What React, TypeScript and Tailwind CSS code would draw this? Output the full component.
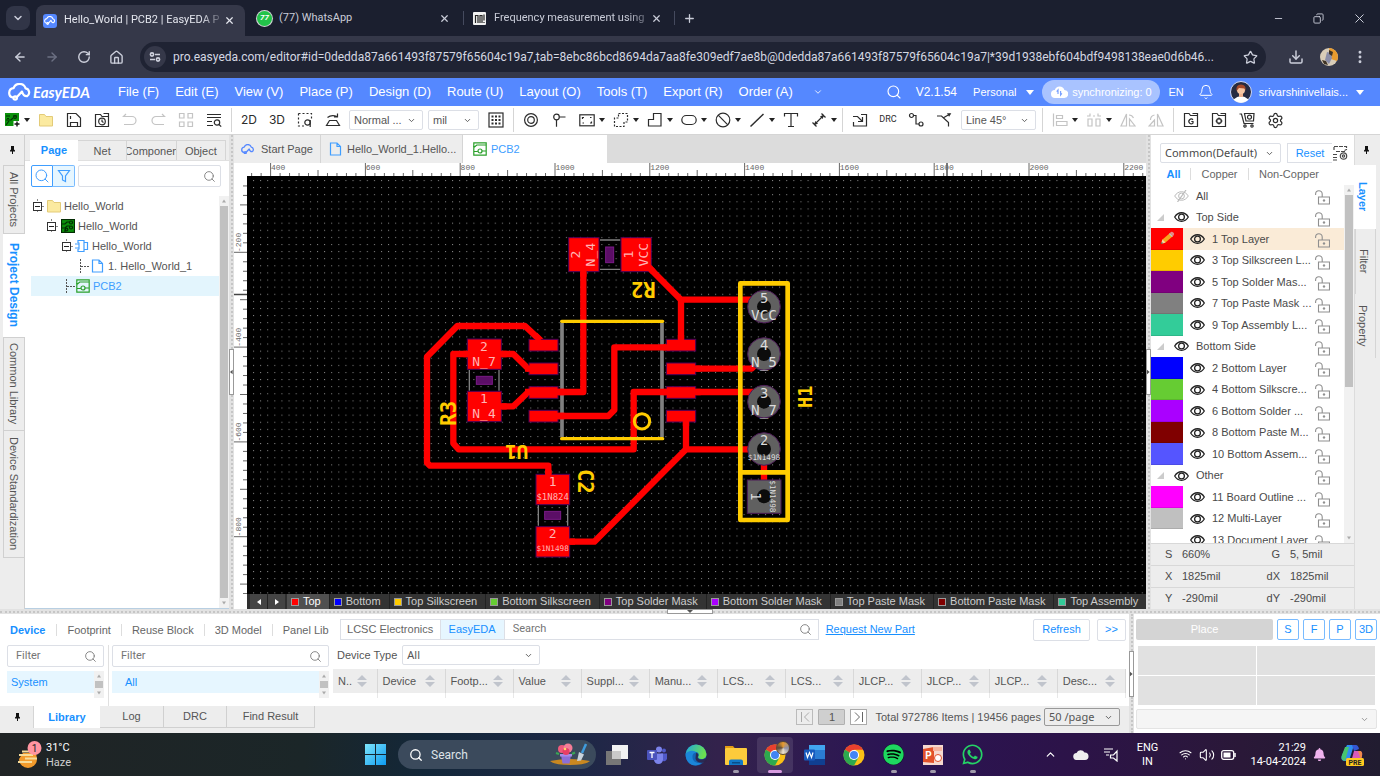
import React from "react";
import {
  ArrowLeft, ArrowRight, RotateCw, House, Star, Download, EllipsisVertical, X, Plus,
  ChevronDown, ChevronUp, Minus, Copy, Search, Bell, Settings, Wifi, Volume2,
} from "lucide-react";
import { FaWhatsapp, FaSpotify, FaBell } from "react-icons/fa";

type IconProps = { children: React.ReactNode; size?: number; className?: string; w?: number };

function Ico({ children, size = 16, w, className = "" }: IconProps) {
  return (
    <svg
      width={w ?? size}
      height={size}
      viewBox={`0 0 ${w ?? size} ${size}`}
      fill="none"
      stroke="currentColor"
      strokeWidth="1.2"
      className={`shrink-0 ${className}`}
      aria-hidden="true"
    >
      {children}
    </svg>
  );
}

/* ---------- Browser chrome ---------- */

function CloudLogo({ className = "" }: { className?: string }) {
  return (
    <svg viewBox="0 0 24 18" fill="none" stroke="currentColor" strokeWidth="2.2" strokeLinecap="round" strokeLinejoin="round" className={className} aria-hidden="true">
      <path d="M5 14.5A4.700 4.700 0 0 1 5.600 5.200 6.300 6.300 0 0 1 17.600 5.400 4.200 4.200 0 0 1 19 13.200Q15.500 13.500 14 8.600L8.500 14.600" />
      <circle cx="7.200" cy="15" r="1.700" />
    </svg>
  );
}

function BrowserTabs() {
  return (
    <div className="flex h-9 shrink-0 items-stretch bg-[#1b1f2f] pl-1.5 font-['Roboto',sans-serif] text-[11px] text-[#c9ccd8]">
      <button aria-label="Search tabs" className="mr-1.5 mt-1.5 flex size-6 items-center justify-center rounded-lg bg-[#313547]">
        <ChevronDown size={12} strokeWidth={3} />
      </button>
      <div className="mt-[5px] flex w-[209px] items-center rounded-t-lg bg-[#353849] pl-[7px] pr-1.5 text-[#e4e6ee]">
        <span className="mr-[7px] flex size-[14px] shrink-0 items-center justify-center rounded-[3px] bg-[#5588ff]">
          <CloudLogo className="w-3 text-white" />
        </span>
        <span className="whitespace-nowrap [mask-image:linear-gradient(to_right,#000_88%,#0004)]">Hello_World | PCB2 | EasyEDA P</span>
        <button aria-label="Close tab" className="ml-auto p-1"><X size={11} strokeWidth={2.6} /></button>
      </div>
      <div className="flex w-[209px] items-center pl-3">
        <span className="mr-[7px] flex size-[15px] items-center justify-center rounded-full bg-[#23c34a] text-[8px] font-bold italic text-white ring-1 ring-white/80">77</span>
        <span>(77) WhatsApp</span>
        <button aria-label="Close tab" className="ml-auto p-1"><X size={11} strokeWidth={2.6} /></button>
      </div>
      <div className="mx-[9px] my-auto h-3.5 w-px shrink-0 bg-[#454a5e]" />
      <div className="flex w-[193px] items-center">
        <svg width="13" height="13" viewBox="0 0 13 13" className="mr-2 shrink-0" aria-hidden="true">
          <rect width="13" height="13" rx="1" fill="#f2f2f2" />
          <path d="M2.500 11V3.500h2.500V11M7 11V3.500h2V11M11 2.500v6M11 10v1" stroke="#222" fill="none" strokeWidth="1.200" />
        </svg>
        <span className="whitespace-nowrap [mask-image:linear-gradient(to_right,#000_88%,#0006)]">Frequency measurement using</span>
        <button aria-label="Close tab" className="ml-auto p-1"><X size={11} strokeWidth={2.6} /></button>
      </div>
      <div className="my-auto ml-2 h-3.5 w-px bg-[#454a5e]" />
      <button aria-label="New tab" className="ml-2"><Plus size={13} strokeWidth={2.4} /></button>
      <div className="ml-auto flex items-center">
        <button aria-label="Minimise" className="flex w-10 justify-center"><Minus size={11} /></button>
        <button aria-label="Restore" className="flex w-10 justify-center"><Copy size={11} className="-scale-x-100" /></button>
        <button aria-label="Close window" className="flex w-[42px] justify-center"><X size={15} strokeWidth={1.6} /></button>
      </div>
    </div>
  );
}

function AddressBar() {
  return (
    <div className="flex h-[42px] shrink-0 items-center bg-[#353849] px-1 text-[#cdd0dc]">
      <button aria-label="Back" className="flex w-8 justify-center"><ArrowLeft size={14} strokeWidth={2.4} /></button>
      <button aria-label="Forward" className="flex w-8 justify-center text-[#6c7083]"><ArrowRight size={14} strokeWidth={2.4} /></button>
      <button aria-label="Reload" className="flex w-8 justify-center"><RotateCw size={14} strokeWidth={2.4} /></button>
      <button aria-label="Home" className="flex w-8 justify-center"><House size={15} strokeWidth={2.2} /></button>
      <div className="ml-2 flex h-[30px] min-w-0 flex-1 items-center rounded-full bg-[#1f2333] pl-1 pr-2">
        <span className="flex size-[22px] items-center justify-center rounded-full bg-[#353849]">
          <Ico size={12}>
            <g strokeWidth="1.6"><circle cx="3" cy="3.500" r="1.600" /><path d="M6 3.500h5M1 8.500h5" /><circle cx="9" cy="8.500" r="1.600" /></g>
          </Ico>
        </span>
        <label className="sr-only" htmlFor="url">Address</label>
        <input
          id="url"
          readOnly
          className="ml-[7px] min-w-0 flex-1 bg-transparent font-['Roboto',sans-serif] text-[12px] text-[#d5d8e2] outline-none"
          value="pro.easyeda.com/editor#id=0dedda87a661493f87579f65604c19a7,tab=8ebc86bcd8694da7aa8fe309edf7ae8b@0dedda87a661493f87579f65604c19a7|*39d1938ebf604bdf9498138eae0d6b46..."
        />
        <Star size={15} strokeWidth={2} className="shrink-0" />
      </div>
      <button aria-label="Downloads" className="ml-4 flex w-7 justify-center"><Download size={16} strokeWidth={2.2} /></button>
      <svg width="18" height="18" viewBox="0 0 18 18" className="ml-2.5" aria-hidden="true">
        <circle cx="9" cy="9" r="9" fill="#d9cdb8" />
        <path d="M9 0a9 9 0 0 1 8 13l-6-2-1-6z" fill="#e89b2e" />
        <path d="M7 4l4 1 1 5-3 6-4-4z" fill="#8b8ea8" />
        <path d="M9 2l4 2-1 4-3-2zM2 12l4 1 2 4-4-1z" fill="#3f3324" />
      </svg>
      <button aria-label="Menu" className="ml-3 mr-1.5 flex w-5 justify-center"><EllipsisVertical size={16} strokeWidth={2.4} /></button>
    </div>
  );
}

/* ---------- Application header ---------- */

const menus = ["File (F)", "Edit (E)", "View (V)", "Place (P)", "Design (D)", "Route (U)", "Layout (O)", "Tools (T)", "Export (R)", "Order (A)"];

function AppHeader() {
  return (
    <header className="flex h-7 shrink-0 items-center bg-[#5588ff] pl-2 pr-4 text-[13px] text-white">
      <CloudLogo className="w-[24px]" />
      <span className="w-[86px] pl-px font-['Lato',sans-serif] text-[15px] font-bold italic">EasyEDA</span>
      <nav className="flex gap-4">
        {menus.map((m) => <button key={m} className="whitespace-nowrap">{m}</button>)}
      </nav>
      <button aria-label="More menus" className="ml-5"><ChevronDown size={10} /></button>
      <span className="flex-1" />
      <button aria-label="Search"><Search size={16} strokeWidth={1.7} /></button>
      <span className="ml-3.5 text-[12px]">V2.1.54</span>
      <button className="ml-4 flex items-center text-[11px]">Personal<Caret className="ml-2.5" big /></button>
      <span className="ml-2 flex h-6 w-[118px] items-center justify-center rounded-full bg-[#a9c3ff] text-[11px]">
        <svg width="17" height="14" viewBox="0 0 17 14" className="mr-1" aria-hidden="true">
          <path d="M4.200 13A4 4 0 0 1 3.800 5 5 5 0 0 1 13.400 5a4 4 0 0 1-.4 8z" fill="#fff" />
          <path d="M7 9V5L5.700 6.600M9.600 6v4l1.300-1.600" stroke="#7ba2ff" strokeWidth="1.200" fill="none" />
        </svg>
        synchronizing: 0
      </span>
      <button className="ml-2 text-[11px]">EN</button>
      <button aria-label="Notifications" className="ml-3.5"><Bell size={16} strokeWidth={1.5} /></button>
      <svg width="22" height="22" viewBox="0 0 22 22" className="ml-4" aria-hidden="true">
        <circle cx="11" cy="11" r="10.500" fill="#272b41" stroke="#cfd8f5" />
        <path d="M3.500 18.500q7.500-7 15 0a10.500 10.500 0 0 1-15 0z" fill="#fff" />
        <rect x="9" y="11" width="4" height="5" fill="#f0b38f" />
        <circle cx="11" cy="9" r="4" fill="#f7c6a3" />
        <path d="M6.500 10Q5.500 3.500 11 3.500T15.500 10L14.500 7.500 9 7z" fill="#a5492b" />
      </svg>
      <button className="ml-[7px] flex items-center text-[11px]">srivarshinivellais...<Caret className="ml-2" big /></button>
    </header>
  );
}

function Caret({ className = "", big = false }: { className?: string; big?: boolean }) {
  return big ? (
    <svg width="8" height="5" viewBox="0 0 8 5" className={`shrink-0 ${className}`} aria-hidden="true"><path d="M0 0h8L4 5z" fill="currentColor" /></svg>
  ) : (
    <svg width="6" height="4" viewBox="0 0 6 4" className={`shrink-0 ${className}`} aria-hidden="true"><path d="M0 0h6L3 4z" fill="#222" /></svg>
  );
}

/* ---------- Toolbar ---------- */

function Tool({ label, children, caret = false, faded = false }: { label: string; children: React.ReactNode; caret?: boolean; faded?: boolean }) {
  return (
    <button
      aria-label={label}
      className={`flex h-full shrink-0 items-center ${caret ? "w-[34px] pl-1.5" : "w-7 justify-center"} ${faded ? "text-[#c4c4c4]" : "text-[#2c2c2c]"}`}
    >
      {children}
      {caret && <Caret className="ml-1" />}
    </button>
  );
}

const Sep = () => <div className="mx-[3px] h-6 w-px shrink-0 bg-[#d5d5d5]" />;

function Dropdown({ label, value, className, plain = false }: { label: string; value: string; className: string; plain?: boolean }) {
  return (
    <span className={`relative flex shrink-0 items-center ${className}`}>
      <select aria-label={label} defaultValue={value} className={`size-full appearance-none rounded-[2px] border pl-1 outline-none ${plain ? "border-[#999] bg-[#ededed]" : "border-[#dcdfe6] bg-white"}`}>
        <option>{value}</option>
      </select>
      <ChevronDown size={9} strokeWidth={2.4} className="pointer-events-none absolute right-[7px] text-[#555]" />
    </span>
  );
}

function BoardIcon() {
  return (
    <Ico size={14}>
      <rect x=".5" y=".5" width="13" height="13" fill="#0c8f0c" stroke="#032c03" />
      <g stroke="#032c03"><path d="M1 5h3l2-2h2M1 9h3l2-2h3M4 13v-2l1-1" /><circle cx="10" cy="3.500" r="1.500" /><circle cx="10" cy="8.500" r="1.500" /><circle cx="5.500" cy="10.500" r="1.300" /></g>
    </Ico>
  );
}

function FolderIcon() {
  return (
    <Ico size={14}>
      <path d="M.5 1.500h5l1.500 2h6.500v9.500H.5z" fill="#fbeaa0" stroke="#e3cb78" strokeWidth="1" />
    </Ico>
  );
}

function Toolbar() {
  return (
    <div className="flex h-[29px] shrink-0 items-center border-b border-[#d5d5d5] bg-white text-[11px] text-[#555]">
      <button aria-label="New project" className="flex w-8 shrink-0 items-center pl-[5px]">
        <Ico size={15} w={16}>
          <rect width="14" height="13" fill="#0b920b" stroke="none" />
          <path d="M1 3h4M8 3h4M1 7h5l2-2M1 12l3-4M2 5.500h2" stroke="#033303" />
          <circle cx="10" cy="4" r="1.400" stroke="#033303" />
          <rect x="8.500" y="8" width="7" height="7" fill="#fff" stroke="none" />
          <path d="M12 8.500v5M9.500 11h5" stroke="#111" strokeWidth="1.400" />
        </Ico>
        <Caret className="ml-[3px]" />
      </button>
      <Tool label="Open"><FolderIcon /></Tool>
      <Tool label="Save"><Ico><path d="M1.500 1.500h8.500l4.500 4.500v8.500h-13zM4.500 14.500V10.500h7v4M4.500 4v3" /></Ico></Tool>
      <Tool label="History"><Ico><path d="M1.500 2.500h5l1.500 2h6.500v10h-13zM14.500 7V1.500h-5" /><circle cx="8" cy="9.500" r="3.300" /><path d="M8 7.500V9.500l1.500 1" /></Ico></Tool>
      <Tool label="Undo" faded><Ico><path d="M4 2L1.500 4.500H10a4 4 0 0 1 0 8H2" /></Ico></Tool>
      <Tool label="Redo" faded><Ico><path d="M12 2l2.500 2.500H6a4 4 0 0 0 0 8h8" /></Ico></Tool>
      <Tool label="Panels" faded><Ico><path d="M1.500 1.500h4.500v4.500H1.500zM10 1.500h4.500v4.500h-4.500zM1.500 10h4.500v4.500H1.500zM10 10h4.500v4.500h-4.500z" /></Ico></Tool>
      <Tool label="Find"><Ico><path d="M1 2.500h14M1 5.500h14M1 9.500h5M1 13.500h6" /><circle cx="11" cy="10.500" r="2.700" /><path d="M13 12.500l2.200 2.200" /></Ico></Tool>
      <Sep />
      <Tool label="2D view"><span className="font-['Inter',sans-serif] text-[12px]">2D</span></Tool>
      <Tool label="3D view"><span className="font-['Inter',sans-serif] text-[12px]">3D</span></Tool>
      <Tool label="Select area"><Ico><path d="M1.500 1.500h13v6M1.500 1.500v12.500h6" strokeDasharray="2 2" /><circle cx="10.500" cy="10.500" r="2.700" /><path d="M13.200 8v7" /></Ico></Tool>
      <Tool label="Flip board"><Ico><path d="M4.500 8.500h7l3 5h-13zM2.500 5.500a7 4 0 0 1 9.500-1M12.500 1.500v3.500H9" /></Ico></Tool>
      <Dropdown label="Display mode" value="Normal ..." className="mx-[2px] h-5 w-[74px]" />
      <Dropdown label="Unit" value="mil" className="mx-[3px] h-5 w-[51px]" />
      <Tool label="Grid"><Ico><rect x="1" y="1" width="14" height="14" /><path d="M3.500 4.500h10M3.500 8h10M3.500 11.500h10" strokeWidth="2" strokeDasharray="2 1.500" /></Ico></Tool>
      <Sep />
      <Tool label="Pad"><Ico><circle cx="8" cy="8" r="6.400" /><circle cx="8" cy="8" r="3.300" /></Ico></Tool>
      <Tool label="Via"><Ico><circle cx="5.500" cy="5" r="2.800" /><path d="M8.300 5h6.200M5.500 7.800v7" /></Ico></Tool>
      <Tool label="Rectangle" caret><Ico><rect x=".8" y="2.800" width="14.400" height="11" /><path d="M3.500 7V5.500H5M12.500 9.500V11H11M11 5.500h1.500M3.500 11H5" /></Ico></Tool>
      <Tool label="Region" caret><Ico><path d="M5.500 1.500h9v8.500h-3.500v4.500h-9.500v-8.500h4z" strokeDasharray="2 1.500" /></Ico></Tool>
      <Tool label="Polygon" caret><Ico><path d="M6.500 1.500h7.500v12.500h-12.500v-6.500h5z" /></Ico></Tool>
      <Tool label="Slot" caret><Ico><rect x=".8" y="3.500" width="14.400" height="9" rx="4.500" /></Ico></Tool>
      <Tool label="Keep-out" caret><Ico><circle cx="8" cy="8" r="6.800" /><path d="M3.200 3.200l9.600 9.600" /></Ico></Tool>
      <Tool label="Line" caret><Ico><path d="M1.500 14.500L14.500 2" strokeWidth="1.500" /></Ico></Tool>
      <Tool label="Text"><Ico><path d="M1.500 4.500v-3h13v3M8 1.500v13M5 14.500h6" /></Ico></Tool>
      <Tool label="Dimension" caret><Ico><path d="M3 13L13 3M1.500 10.500l4 4M10.500 1.500l4 4" /><path d="M3 13l1.300-4L7 11.700zM13 3L9 4.300 11.700 7z" fill="currentColor" stroke="none" /></Ico></Tool>
      <Sep />
      <Tool label="Import"><Ico><path d="M9 2.500h5.500v11.500h-13v-4M1 4.500h4.500L10 9M10.500 5v4.500H6" /></Ico></Tool>
      <Tool label="Design rule check"><span className="font-['Roboto',sans-serif] text-[9px]">DRC</span></Tool>
      <Tool label="Route"><Ico><circle cx="3.500" cy="3.500" r="2" /><path d="M5.500 3.500h2.500v8.500h3" /><circle cx="13" cy="12" r="2" /></Ico></Tool>
      <Tool label="Differential pair"><Ico><path d="M1 4h4.500l7 6.500V14.500M7 6L14 2" /><path d="M11 1.200h4.300l-2.200 3.500z" fill="currentColor" stroke="none" /></Ico></Tool>
      <Dropdown label="Routing corner" value="Line 45°" className="mx-[3px] h-5 w-[75px]" />
      <Sep />
      <Tool label="Align" caret faded><Ico><path d="M1.500 1.500v13M4.500 3.500h6v3h-6zM4.500 9.500h10.500v4h-10.500z" /></Ico></Tool>
      <Tool label="Distribute" caret faded><Ico><path d="M2 7h4v7H2zM10 7h4v7h-4zM1 4h3M7 4h2M12 4h3M4 1.500v3M12 1.500v3" /></Ico></Tool>
      <Tool label="Mirror left" faded><Ico><path d="M6.500 2L1 14h5.500zM9.500 7v7h5.500zM9 3a5 5 0 0 1 4.500 3" /></Ico></Tool>
      <Tool label="Mirror right" faded><Ico><path d="M9.500 2l5.500 12H9.500zM6.500 8L1 14h5.500zM2.500 8a5 5 0 0 1 4-5" /></Ico></Tool>
      <Sep />
      <Tool label="Gerber"><Ico><path d="M1.500 14.500v-13h4.500l1.500 2h7v11zM14.500 3.500v-2h-5" /><path d="M10 7.700a2.400 2.400 0 1 0 0 3.400V9.500H8.300" /></Ico></Tool>
      <Tool label="Pick and place"><Ico><path d="M1.500 14.500v-13h4.500l1.500 2h7v11zM14.500 3.500v-2h-5" /><circle cx="8" cy="9" r="2.400" /><path d="M8 5.500v2M8 10.500v2M4.500 9h2M9.500 9h2" /></Ico></Tool>
      <Tool label="Order"><Ico><path d="M.5 2h2l2.500 9.500h9.500M5.500 1.500h9.500l-.5 7.500h-7.500z" /><circle cx="10.500" cy="5.200" r="2" /><circle cx="6" cy="14" r="1.200" /><circle cx="13" cy="14" r="1.200" /></Ico></Tool>
      <Tool label="Settings"><Settings size={17} strokeWidth={1.7} /></Tool>
    </div>
  );
}

/* ---------- Left side ---------- */

function Pin() {
  return (
    <svg width="5" height="8" viewBox="0 0 5 8" aria-hidden="true"><path d="M1 0h3v3.500l1 1V5.500H3V8H2V5.500H0V4.500l1-1z" fill="#111" /></svg>
  );
}

const sideTab = "flex w-[21px] items-center justify-center border border-r-0 border-[#d0d0d0] [writing-mode:vertical-rl]";

function LeftRail() {
  return (
    <div className="flex w-[25px] shrink-0 flex-col items-end border-r border-[#d0d0d0] bg-[#ededed] text-[11px] text-[#555]">
      <button aria-label="Pin panel" className="mr-[9px] flex h-[30px] items-center"><Pin /></button>
      <button className={`${sideTab} h-[69px]`}>All Projects</button>
      <button className="-mr-px flex h-[103px] w-[22px] items-center justify-center bg-white text-[12px] font-bold text-[#1890ff] [writing-mode:vertical-rl]">Project Design</button>
      <button className={`${sideTab} h-[94px]`}>Common Library</button>
      <button className={`${sideTab} h-[127px] border-t-0`}>Device Standardization</button>
    </div>
  );
}

function ScrollBar({ className = "", thumb = "h-full" }: { className?: string; thumb?: string }) {
  return (
    <div className={`flex shrink-0 flex-col items-center bg-[#f1f1f1] ${className}`} aria-hidden="true">
      <svg width="6" height="10" viewBox="0 0 6 10"><path d="M1 6.500h4l-2-3z" fill="#aaa" /></svg>
      <div className="flex min-h-0 w-full flex-1 flex-col px-[1px]"><div className={`bg-[#c1c1c1] ${thumb}`} /></div>
      <svg width="6" height="10" viewBox="0 0 6 10"><path d="M1 3.500h4l-2 3z" fill="#aaa" /></svg>
    </div>
  );
}

function Expander() {
  return (
    <Ico size={14} w={14}>
      <path d="M5.500 0v3M5.500 11v3M10 7.500h3" stroke="#888" strokeWidth="1" strokeDasharray="2 1" />
      <rect x="1.500" y="3.500" width="8" height="8" stroke="#333" strokeWidth="1" />
      <path d="M3 7.500h5" stroke="#222" strokeWidth="1" />
    </Ico>
  );
}

function Branch() {
  return <Ico size={14} w={10}><path d="M1.500 0v14M2 7.500h8" strokeWidth="1" strokeDasharray="2 1" stroke="#555" /></Ico>;
}

function SheetIcon() {
  return <Ico size={14} w={13} className="text-[#409eff]"><path d="M1.500 1h6.500l3.500 3.500V13h-10zM8 1v3.500h3.500" /></Ico>;
}

function PcbIcon() {
  return <Ico size={14} className="text-[#2aa02a]"><path d="M.8.8h12.400v12.400H.8zM.8 5.500l3-2.500h9.400M.8 9.500h4M9 9h4" /><circle cx="7" cy="9" r="2" /></Ico>;
}

function LeftPanel() {
  const tabs = ["Net", "Componen", "Object"];
  return (
    <div className="flex w-[204px] shrink-0 flex-col bg-white text-[11px] text-[#555]">
      <div className="flex h-[26px] border-b border-[#e0e0e0] bg-[#ededed] pl-[5px] pr-[3px] pt-[5px]">
        <button className="-mb-px w-12 bg-white font-bold text-[#1890ff]">Page</button>
        {tabs.map((t) => (
          <button key={t} className="flex flex-1 justify-center overflow-hidden border-r border-t border-[#d5d5d5] leading-[20px]">{t}</button>
        ))}
      </div>
      <div className="mt-1 flex h-[22px] w-full gap-[3px] pl-1.5 pr-2">
        <div className="flex">
          <button aria-label="Search mode" className="flex w-[22px] items-center justify-center rounded-l-[2px] border border-[#409eff] text-[#409eff]"><Search size={16} strokeWidth={1.5} /></button>
          <button aria-label="Filter mode" className="flex w-[22px] items-center justify-center rounded-r-[2px] border border-l-0 border-[#79bbff] bg-[#e6f6ff] text-[#409eff]">
            <Ico size={14}><path d="M1.500 1.500h11L8.500 7v5.500l-3-1.500V7z" /></Ico>
          </button>
        </div>
        <label className="flex min-w-0 flex-1 items-center rounded-[2px] border border-[#dcdfe6] pr-1">
          <input aria-label="Search project" className="min-w-0 flex-1 outline-none" />
          <Search size={13} strokeWidth={1.6} className="text-[#777]" />
        </label>
      </div>
      <div className="mt-[9px] flex min-h-0 flex-1 border-b border-[#b8cfe2]">
        <div className="ml-1.5 flex-1 leading-5">
          <div className="flex h-5 items-center pl-px"><Expander /><span className="ml-px"><FolderIcon /></span><span className="ml-[3px]">Hello_World</span></div>
          <div className="flex h-5 items-center pl-[15px]"><Expander /><span className="ml-px"><BoardIcon /></span><span className="ml-[3px]">Hello_World</span></div>
          <div className="flex h-5 items-center pl-[30px]">
            <Expander />
            <Ico size={14} className="text-[#409eff]"><path d="M3 4V1.500h6V4M3 10v2.500h6V10M0 5h4M0 9h4M4 3.500v7M9 3.500h3.500v7H9z" /></Ico>
            <span className="ml-[3px]">Hello_World</span>
          </div>
          <div className="flex h-5 items-center pl-12"><Branch /><span className="ml-0.5"><SheetIcon /></span><span className="ml-1">1. Hello_World_1</span></div>
          <div className="flex h-5 items-center bg-[#e3f5fd] pl-[34px] text-[#409eff]"><Branch /><span className="ml-px"><PcbIcon /></span><span className="ml-[3px]">PCB2</span></div>
        </div>
        <ScrollBar className="w-[10px]" />
      </div>
    </div>
  );
}

function VSplit({ arrow }: { arrow: "left" | "right" }) {
  return (
    <div className="flex w-[5px] shrink-0 flex-col items-center justify-center bg-[#e2e2e2]">
      <div className="w-0 flex-1 border-l-2 border-dotted border-[#c6c6c6]" />
      <div className="flex h-[46px] w-[5px] items-center border border-[#999] bg-white">
        <svg width="4" height="6" viewBox="0 0 4 6" aria-hidden="true"><path d={arrow === "left" ? "M3.500 0v6L0 3z" : "M0 0v6l3.500-3z"} fill="#555" /></svg>
      </div>
      <div className="w-0 flex-1 border-l-2 border-dotted border-[#c6c6c6]" />
    </div>
  );
}

/* ---------- Board canvas ---------- */

const topLabels = [400, 600, 800, 1000, 1200, 1400, 1600, 1800, 2000, 2200];
const leftLabels = [-200, -400, -600, -800];
const MAJOR = 94.8;

function Rulers() {
  const minorX = Array.from({ length: 96 }, (_, i) => i - 2);
  const minorY = Array.from({ length: 54 }, (_, i) => i - 7);
  return (
    <g stroke="#666" strokeWidth="1" fontFamily="Liberation Mono, monospace" fontSize="8">
      {minorX.map((i) => {
        const x = 36.6 + (i * MAJOR) / 10;
        const len = i % 10 === 0 ? 13 : i % 5 === 0 ? 6 : 3;
        return <path key={i} d={`M${x} 13v-${len}`} />;
      })}
      {minorY.map((i) => {
        const y = 89.3 + (i * MAJOR) / 10;
        const len = i % 10 === 0 ? 13 : i % 5 === 0 ? 7 : 4;
        return y > 13 ? <path key={i} d={`M13 ${y}h-${len}`} /> : null;
      })}
      <path d="M713 0v13M0 131.500h13" stroke="#444" strokeWidth="1.400" />
      {topLabels.map((v, i) => <text key={v} x={37 + i * MAJOR} y="7" fill="#666" stroke="none">{v}</text>)}
      {leftLabels.map((v, i) => (
        <text key={v} transform={`translate(7 ${89 + i * MAJOR}) rotate(-90)`} fill="#666" stroke="none">{v}</text>
      ))}
    </g>
  );
}

type PadText = { x: number; y: number; t: string; s: number; r?: number };

const padTexts: PadText[] = [
  { x: 252, y: 379, t: "2", s: 39 }, { x: 252, y: 424, t: "N_7", s: 39 },
  { x: 252, y: 536, t: "1", s: 39 }, { x: 252, y: 580, t: "N_4", s: 39 },
  { x: 458, y: 784, t: "1", s: 39 }, { x: 458, y: 829, t: "$1N824", s: 27 },
  { x: 458, y: 941, t: "2", s: 39 }, { x: 458, y: 986, t: "$1N1498", s: 23 },
  { x: 527, y: 104, t: "2", s: 39, r: -90 }, { x: 571, y: 104, t: "N_4", s: 39, r: -90 },
  { x: 684, y: 104, t: "1", s: 39, r: -90 }, { x: 729, y: 104, t: "VCC", s: 39, r: -90 },
];
const holeTexts: PadText[] = [
  { x: 1092, y: 233, t: "5", s: 41 }, { x: 1092, y: 283, t: "VCC", s: 43 },
  { x: 1092, y: 376, t: "4", s: 41 }, { x: 1092, y: 426, t: "N_5", s: 43 },
  { x: 1092, y: 518, t: "3", s: 41 }, { x: 1092, y: 568, t: "N_7", s: 43 },
  { x: 1092, y: 660, t: "2", s: 41 }, { x: 1092, y: 711, t: "$1N1498", s: 23 },
  { x: 1068, y: 829, t: "1", s: 41, r: 90 }, { x: 1118, y: 829, t: "$1N1498", s: 23, r: 90 },
];
const silkTexts: PadText[] = [
  { x: 730, y: 209, t: "R2", s: 62, r: 180 }, { x: 147, y: 580, t: "R3", s: 62, r: -90 },
  { x: 350, y: 697, t: "U1", s: 58, r: 180 }, { x: 557, y: 784, t: "C2", s: 62, r: 90 },
  { x: 1215, y: 530, t: "H1", s: 56, r: -90 },
];

function Labels({ items, fill, bold = false }: { items: PadText[]; fill: string; bold?: boolean }) {
  return (
    <g fill={fill} textAnchor="middle" fontFamily="DejaVu Sans Mono, monospace" fontWeight={bold ? 700 : 400}>
      {items.map((p, i) => (
        <text key={i} transform={`translate(${p.x} ${p.y}) rotate(${p.r ?? 0})`} y={p.s * 0.36} fontSize={p.s}>{p.t}</text>
      ))}
    </g>
  );
}

function Board() {
  const rows = [358, 429, 500, 571];
  return (
    <g transform="translate(166 57) scale(.33333)">
      <g stroke="#808080" fill="none">
        <path d="M486 308V652M786 308V652" strokeWidth="11" />
        <path d="M600 60h61M600 148h61M208 450v62M297 450v62M415 855v62M503 855v62" strokeWidth="4" />
      </g>
      <g stroke="#f00" strokeWidth="19" fill="none" strokeLinecap="round" strokeLinejoin="round">
        <path d="M445 770V737H90L81 728V410L172 318H375L425 365" />
        <path d="M252 402H160V670L176 688H701V516H1060L1085 535" />
        <path d="M252 402H340L385 446H430" />
        <path d="M252 559H340L385 516H550V104" />
        <path d="M430 588H625L643 570V382H843" />
        <path d="M730 125L843 239H1070M843 239V375" />
        <path d="M843 446H1055L1085 415" />
        <path d="M858 588V688L583 965H458M858 688H1092V830" />
      </g>
      <g fill="#f00" stroke="#4c0057" strokeWidth="3">
        {rows.map((y) => <rect key={y} x="387" y={y} width="87" height="35" />)}
        {rows.map((y) => <rect key={y} x="799" y={y} width="88" height="35" />)}
        <rect x="202" y="357" width="102" height="91" /><rect x="202" y="514" width="102" height="91" />
        <rect x="506" y="53" width="91" height="102" /><rect x="663" y="53" width="91" height="102" />
        <rect x="408" y="763" width="101" height="91" /><rect x="408" y="920" width="101" height="91" />
      </g>
      <g stroke="#f00" strokeWidth="19" fill="none">
        <path d="M843 345v30M550 140v30M290 402h30M290 559h30M190 402h25M465 516h29M465 588h29M500 965h25M858 595v23M738 133l22 22M880 446h22M880 516h22M405 345l16 16M375 446h20M375 516h20M445 750v20M790 516h20M790 382h20" />
      </g>
      <g fill="#5b0e66" stroke="#7a1b86" strokeWidth="3">
        <rect x="229" y="469" width="48" height="24" /><rect x="617" y="81" width="24" height="47" /><rect x="434" y="874" width="48" height="24" />
      </g>
      <g stroke="#fc0" fill="none" strokeLinecap="round" strokeLinejoin="round">
        <path d="M485 304H788M485 656H788" strokeWidth="10" />
        <circle cx="726" cy="604" r="23" strokeWidth="9" />
        <path d="M1021 190H1163V900H1021zM1021 757H1163" strokeWidth="14" />
      </g>
      <g fill="#606060" stroke="#4c1a57" strokeWidth="3">
        {[260, 402, 545, 687].map((y) => <circle key={y} cx="1092" cy={y} r="49" />)}
        <rect x="1042" y="780" width="101" height="100" />
      </g>
      {[260, 402, 545, 687, 829].map((y) => <circle key={y} cx="1092" cy={y} r="21" fill="#0c0c0c" />)}
      <Labels items={padTexts} fill="#ffb3b3" />
      <Labels items={holeTexts} fill="#dcdcdc" />
      <Labels items={silkTexts} fill="#fc0" bold />
    </g>
  );
}

const layerTabs: [string, string][] = [
  ["Top", "bg-[#ff0000]"], ["Bottom", "bg-[#0000ff]"], ["Top Silkscreen", "bg-[#ffcc00]"], ["Bottom Silkscreen", "bg-[#66cc33]"],
  ["Top Solder Mask", "bg-[#800080]"], ["Bottom Solder Mask", "bg-[#aa00ff]"], ["Top Paste Mask", "bg-[#808080]"],
  ["Bottom Paste Mask", "bg-[#800000]"], ["Top Assembly", "bg-[#33cc99]"],
];

function CanvasArea() {
  return (
    <div className="flex min-w-0 flex-1 flex-col text-[11px]">
      <div className="flex h-7 shrink-0 bg-[#dcdcdc] text-[#555]">
        <button className="flex w-[87px] items-center border-r border-[#d5d5d5] bg-[#ededed] pl-[7px]"><CloudLogo className="mr-1.5 w-3.5 text-[#5588ff]" />Start Page</button>
        <button className="flex w-[142px] items-center border-r border-[#d5d5d5] bg-[#ededed] pl-2"><SheetIcon /><span className="ml-[5px]">Hello_World_1.Hello...</span></button>
        <button className="flex w-36 items-center bg-white pl-2.5 text-[#409eff]"><PcbIcon /><span className="ml-1">PCB2</span></button>
      </div>
      <div className="flex min-h-0 flex-1 flex-col">
        <svg className="block min-h-0 w-full flex-1 bg-white" role="img" aria-label="Circuit board layout">
          <defs>
            <pattern id="dots" width="7.110" height="7.110" x="19" y="17" patternUnits="userSpaceOnUse">
              <rect width="1" height="1" fill="#8a8a8a" />
            </pattern>
          </defs>
          <rect x="13" y="13" width="100%" height="100%" fill="#000" />
          <rect x="14" y="14" width="100%" height="100%" fill="url(#dots)" />
          <Rulers />
          <Board />
        </svg>
        <div className="flex h-[15px] shrink-0 overflow-hidden bg-[linear-gradient(to_right,#fff_13px,#2f2f2f_13px)] pl-4 text-[#ccc]">
          <span className="mr-0.5 flex w-[35px] shrink-0 bg-[#444]">
            <button aria-label="Previous layers" className="flex flex-1 items-center justify-center"><svg width="4" height="6" viewBox="0 0 4 6"><path d="M4 0v6L0 3z" fill="#fff" /></svg></button>
            <button aria-label="Next layers" className="flex flex-1 items-center justify-center border-l border-[#222]"><svg width="4" height="6" viewBox="0 0 4 6"><path d="M0 0v6l4-3z" fill="#fff" /></svg></button>
          </span>
          {layerTabs.map(([name, color], i) => (
            <button key={name} className={`flex shrink-0 items-center gap-1 whitespace-nowrap border-r border-[#222] pl-1 pr-2 ${i === 0 ? "bg-[#505050] text-white" : "bg-[#333]"}`}>
              <span className={`size-2 border border-[#999] ${color}`} />{name}
            </button>
          ))}
        </div>
      </div>
    </div>
  );
}

/* ---------- Layer panel ---------- */

type Row = { name: string; color?: string; kind: "all" | "group" | "layer"; active?: boolean };
const layerRows: Row[] = [
  { name: "All", kind: "all" },
  { name: "Top Side", kind: "group" },
  { name: "1 Top Layer", kind: "layer", color: "bg-[#ff0000]", active: true },
  { name: "3 Top Silkscreen L...", kind: "layer", color: "bg-[#ffcc00]" },
  { name: "5 Top Solder Mas...", kind: "layer", color: "bg-[#800080]" },
  { name: "7 Top Paste Mask ...", kind: "layer", color: "bg-[#808080]" },
  { name: "9 Top Assembly L...", kind: "layer", color: "bg-[#33cc99]" },
  { name: "Bottom Side", kind: "group" },
  { name: "2 Bottom Layer", kind: "layer", color: "bg-[#0000ff]" },
  { name: "4 Bottom Silkscre...", kind: "layer", color: "bg-[#66cc33]" },
  { name: "6 Bottom Solder ...", kind: "layer", color: "bg-[#aa00ff]" },
  { name: "8 Bottom Paste M...", kind: "layer", color: "bg-[#800000]" },
  { name: "10 Bottom Assem...", kind: "layer", color: "bg-[#5555ff]" },
  { name: "Other", kind: "group" },
  { name: "11 Board Outline ...", kind: "layer", color: "bg-[#ff00ff]" },
  { name: "12 Multi-Layer", kind: "layer", color: "bg-[#c0c0c0]" },
  { name: "13 Document Layer", kind: "layer", color: "bg-white" },
];

function EyeIcon({ off = false }: { off?: boolean }) {
  return (
    <Ico size={12} w={15} className={off ? "text-[#bbb]" : "text-[#222]"}>
      <path d="M.7 6C4 .3 11 .3 14.300 6 11 11.700 4 11.700.7 6z" strokeWidth={off ? 1 : 1.300} />
      <circle cx="7.500" cy="6" r="2.900" strokeWidth={off ? 1 : 1.300} />
      {off && <path d="M12 0L3.500 12" />}
    </Ico>
  );
}

function LockIcon() {
  return (
    <Ico size={15} className="mt-1 text-[#8f8f8f]">
      <path d="M.6 5V4a3 3 0 0 1 6.600 0v3M3.500 7h11v7h-11z" strokeWidth="1.100" />
      <path d="M9 9v3M7.800 10.500h2.400" strokeWidth="1.100" />
    </Ico>
  );
}

function Pencil() {
  return (
    <svg width="15" height="14" viewBox="0 0 15 14" aria-hidden="true">
      <path d="M1 13l1.500-4.500L10 2l3 3-7.500 6.500z" fill="#f6a821" />
      <path d="M1 13l1.500-4.500 3 3z" fill="#f5d9a8" /><path d="M1 13l.7-2 1.300 1.300z" fill="#333" />
      <path d="M9 3l3 3 1-1-3-3z" fill="#b9c4cc" /><path d="M10 2q1.500-2 3.300-.5T13 5z" fill="#e58a86" />
    </svg>
  );
}

function LayerPanel() {
  const info = [["S", "660%", "G", "5, 5mil"], ["X", "1825mil", "dX", "1825mil"], ["Y", "-290mil", "dY", "-290mil"]];
  return (
    <div className="flex w-[203px] shrink-0 flex-col bg-white text-[11px] text-[#4a4a4a]">
      <div className="flex h-7 items-end pl-[9px]">
        <Dropdown label="Layer preset" value="Common(Default)" className="h-5 w-[121px] font-['Noto_Sans',sans-serif]" />
        <button className="ml-1.5 h-5 w-[45px] border border-r-0 border-[#dcdfe6] text-[#1890ff]">Reset</button>
        <button aria-label="Layer manager" className="mb-0.5">
          <Ico size={16}><path d="M2 1.500h12.500v3l-2 1M4 6.500h9M1 9.500h5M1 12.500h5M1 15h5M2 2v3" strokeDasharray="4 1" /><circle cx="11.500" cy="11" r="3.200" /><circle cx="11.500" cy="11" r="1.200" /></Ico>
        </button>
      </div>
      <div className="flex h-[22px] items-center text-[#666]">
        <button className="w-10 border-r border-[#ddd] pl-1.5 font-bold leading-3 text-[#1890ff]">All</button>
        <button className="w-[58px] border-r border-[#ddd] leading-3">Copper</button>
        <button className="w-20 leading-3">Non-Copper</button>
      </div>
      <div className="flex min-h-0 flex-1 overflow-hidden">
        <div className="grid h-[366px] flex-1 grid-rows-[repeat(17,1fr)]">
          {layerRows.map((r) => (
            <div key={r.name} className={`flex items-center ${r.active ? "bg-[#faebd7]" : ""}`}>
              {r.kind === "layer" ? (
                <>
                  <span className={`flex h-full w-8 items-center justify-center border-b border-black/10 ${r.color}`}>{r.active && <Pencil />}</span>
                  <button aria-label={`Toggle ${r.name}`} className="mx-[7px]"><EyeIcon /></button>
                </>
              ) : (
                <>
                  <span className="flex w-[23px] pl-1.5">{r.kind === "group" && <svg width="7" height="7" viewBox="0 0 7 7" aria-hidden="true"><path d="M7 0v7H0z" fill="#ccc" /></svg>}</span>
                  <button aria-label={`Toggle ${r.name}`} className="mr-[7px]"><EyeIcon off={r.kind === "all"} /></button>
                </>
              )}
              <span className="flex-1 whitespace-nowrap">{r.name}</span>
              <button aria-label={`Lock ${r.name}`} className="mr-[14px]"><LockIcon /></button>
            </div>
          ))}
        </div>
        <ScrollBar className="w-[10px]" thumb="h-[57%]" />
      </div>
      <table className="w-full shrink-0 bg-[#ededed]">
        <tbody>
          {info.map((r) => (
            <tr key={r[0]} className="h-[22px] border-t border-[#d8d8d8]">
              <td className="w-[31px] pl-3.5">{r[0]}</td><td className="w-[74px]">{r[1]}</td>
              <td className="w-6 text-right">{r[2]}</td><td className="pl-2.5">{r[3]}</td>
            </tr>
          ))}
        </tbody>
      </table>
    </div>
  );
}

function RightRail() {
  return (
    <div className="flex w-[26px] shrink-0 flex-col items-start border-l border-[#dcdcdc] bg-[#ededed] text-[11px] text-[#555]">
      <button aria-label="Pin layer panel" className="ml-[9px] flex h-[30px] items-center"><Pin /></button>
      <button className="-ml-px flex h-16 w-[22px] items-center justify-center bg-white pr-1 font-bold text-[#1890ff] [writing-mode:vertical-rl]">Layer</button>
      <button className="flex h-[65px] w-[21px] items-center justify-center border-y border-r border-[#d5d5d5] pr-1 [writing-mode:vertical-rl]">Filter</button>
      <button className="flex h-16 w-[21px] items-center justify-center border-r border-[#d5d5d5] pr-1 [writing-mode:vertical-rl]">Property</button>
    </div>
  );
}

/* ---------- Library panel ---------- */

function SearchBox({ label, className }: { label: string; className: string }) {
  return (
    <label className={`flex items-center rounded-[2px] border border-[#dcdfe6] bg-white pr-1.5 ${className}`}>
      <input aria-label={label} placeholder={label} className="min-w-0 flex-1 pl-2 font-['Roboto',sans-serif] text-[11px] outline-none placeholder:text-[#757575]" />
      <Search size={13} strokeWidth={1.6} className="shrink-0 text-[#777]" />
    </label>
  );
}

function SortArrows() {
  return <svg width="10" height="12" viewBox="0 0 10 12" className="shrink-0" aria-hidden="true"><path d="M0 5h10L5 0zM0 7h10L5 12z" fill="#c0c4cc" /></svg>;
}

const libTabs = ["Footprint", "Reuse Block", "3D Model", "Panel Lib"];
const columns = ["N..", "Device", "Footp...", "Value", "Suppl...", "Manu...", "LCS...", "LCS...", "JLCP...", "JLCP...", "JLCP...", "Desc..."];

function LibraryPanel() {
  return (
    <div className="flex min-w-0 flex-1 flex-col bg-white text-[11px] text-[#555]">
      <div className="flex h-[31px] items-center pl-2.5 pr-[3px] text-[#666]">
        <button className="pr-[11px] font-bold leading-3 text-[#1890ff]">Device</button>
        {libTabs.map((t, i) => <button key={t} className={`border-l border-[#ddd] pl-2.5 leading-3 ${i === 3 ? "" : "pr-[10px]"}`}>{t}</button>)}
        <div className="ml-[11px] flex h-[21px] border border-[#dcdfe6]">
          <button className="w-[100px] border-r border-[#dcdfe6]">LCSC Electronics</button>
          <button className="w-16 border-r border-[#dcdfe6] bg-[#e6f6ff] text-[#1890ff]">EasyEDA</button>
          <SearchBox label="Search" className="h-full w-[313px] border-0" />
        </div>
        <a href="#request" className="ml-[7px] text-[#1890ff] underline">Request New Part</a>
        <button className="ml-auto h-[22px] w-[57px] rounded-[2px] border border-[#dcdfe6] text-[#1890ff]">Refresh</button>
        <button className="ml-[7px] h-[22px] w-[29px] rounded-[2px] border border-[#dcdfe6] text-[#1890ff]">&gt;&gt;</button>
      </div>
      <div className="flex min-h-0 flex-1">
        <div className="flex w-[109px] flex-col border-r border-[#e0e0e0] pl-[7px] pr-1">
          <SearchBox label="Filter" className="h-[22px] shrink-0" />
          <div className="mt-1 flex h-[27px]">
            <div className="h-[22px] flex-1 bg-[#e6f6ff] pl-1 leading-[22px] text-[#1890ff]">System</div>
            <ScrollBar className="w-[10px]" />
          </div>
        </div>
        <div className="flex w-[221px] flex-col pl-[3px] pr-px">
          <SearchBox label="Filter" className="h-[22px] shrink-0" />
          <div className="mt-1 flex h-[27px]">
            <div className="h-[22px] flex-1 bg-[#e6f6ff] pl-[13px] leading-[22px] text-[#1890ff]">All</div>
            <ScrollBar className="w-[10px]" />
          </div>
        </div>
        <div className="flex min-w-0 flex-1 flex-col pl-[3px] pr-[3px]">
          <div className="flex h-5 shrink-0 items-center pl-1"><span className="mr-[5px]">Device Type</span><Dropdown label="Device Type" value="All" className="h-5 w-[138px] font-['Noto_Sans',sans-serif]" /></div>
          <table className="mt-1 w-full table-fixed border-collapse text-left">
            <thead>
              <tr className="h-6 bg-[#ededed]">
                {columns.map((c, i) => (
                  <th key={i} className={`border-r border-[#d8d8d8] p-0 font-normal ${i === 0 ? "w-11" : ""}`}>
                    <span className={`flex items-center justify-between pr-[10px] ${i === 0 ? "pl-[5px]" : "pl-[5px]"}`}><span>{c}</span><SortArrows /></span>
                  </th>
                ))}
              </tr>
            </thead>
            <tbody><tr className="h-[5px]">{columns.map((_, i) => <td key={i} className="border-r border-[#e8e8e8] p-0" />)}</tr></tbody>
          </table>
        </div>
      </div>
      <div className="flex h-[27px] shrink-0 items-start bg-[#ededed]">
        <button aria-label="Pin library" className="flex h-[22px] w-[34px] items-center justify-center border-r border-[#d5d5d5] pl-px"><Pin /></button>
        <button className="h-[22px] w-[66px] bg-white font-bold text-[#1890ff]">Library</button>
        <button className="h-[22px] w-16 border-b border-r border-[#d0d0d0]">Log</button>
        <button className="h-[22px] w-[63px] border-b border-r border-[#d0d0d0]">DRC</button>
        <button className="h-[22px] w-[88px] border-b border-r border-[#d0d0d0]">Find Result</button>
        <div className="ml-auto mr-[9px] mt-[2px] flex h-[18px] items-center">
          <button aria-label="First page" className="flex h-4 w-[17px] items-center justify-center border border-[#bbb] text-[#aaa]"><Ico size={10}><path d="M1.500 0v10M9 .5L4.500 5 9 9.500" strokeWidth="1" /></Ico></button>
          <button className="mx-[5px] h-4 w-[27px] rounded-[1px] border border-[#b0b0b0] bg-[#cfcfcf] leading-3">1</button>
          <button aria-label="Last page" className="flex h-4 w-[17px] items-center justify-center border border-[#aaa] bg-white text-[#666]"><Ico size={10}><path d="M8.500 0v10M1 .5L5.500 5 1 9.500" strokeWidth="1" /></Ico></button>
          <span className="ml-2 mr-[3px]">Total 972786 Items | 19456 pages</span>
          <Dropdown label="Page size" value="50 /page" plain className="h-[18px] w-[76px] font-['Noto_Sans',sans-serif]" />
        </div>
      </div>
    </div>
  );
}

function PreviewPanel() {
  return (
    <div className="flex w-[246px] shrink-0 flex-col bg-white pl-0.5 pr-[3px] text-[11px]">
      <div className="mt-[5px] flex h-[21px] gap-1">
        <button className="flex-1 rounded-[2px] bg-[#d4d4d4] text-white">Place</button>
        {["S", "F", "P", "3D"].map((t) => <button key={t} className="w-[22px] shrink-0 rounded-[2px] border border-[#79bbff] text-[#1890ff]">{t}</button>)}
      </div>
      <div className="mx-0.5 mt-1.5 grid h-[59px] grid-cols-2 grid-rows-2 gap-px">
        {[0, 1, 2, 3].map((i) => <div key={i} className="bg-[#e1e1e1]" />)}
      </div>
      <span className="relative mt-1 flex h-5 items-center">
        <select aria-label="Footprint variant" className="size-full appearance-none rounded-[2px] border border-[#e4e4e4] bg-[#f5f5f5]" />
        <ChevronDown size={9} strokeWidth={2.2} className="pointer-events-none absolute right-2 text-[#888]" />
      </span>
    </div>
  );
}

/* ---------- Taskbar ---------- */

function Chrome() {
  return (
    <svg width="22" height="22" viewBox="0 0 22 22" aria-hidden="true">
      <circle cx="11" cy="11" r="10.500" fill="#fbc116" />
      <path d="M11 11L1.900 5.750A10.500 10.500 0 0 1 20.100 5.750H11z" fill="#e8402f" />
      <path d="M11 11L1.900 5.750A10.500 10.500 0 0 0 11 21.500L15.500 13.600z" fill="#2da94f" />
      <circle cx="11" cy="11" r="5" fill="#fff" /><circle cx="11" cy="11" r="4" fill="#4285f4" />
    </svg>
  );
}

function TaskIcon({ label, children, dot = "" }: { label: string; children: React.ReactNode; dot?: string }) {
  return (
    <button aria-label={label} className={`relative flex h-9 w-9 items-center justify-center rounded ${dot === "active" ? "bg-white/10" : ""}`}>
      {children}
      {dot && <span className={`absolute bottom-0 h-[3px] rounded-full ${dot === "active" ? "w-3.5 bg-[#d89be0]" : "w-1.5 bg-[#a09aab]"}`} />}
    </button>
  );
}

function Taskbar() {
  return (
    <footer className="flex h-[43px] shrink-0 items-center bg-[linear-gradient(to_right,#202425_0%,#1b2628_22%,#132739_31%,#1d2846_42%,#33224c_52%,#2b1454_65%,#2c1348_78%,#2a1838_90%,#211c30_100%)] px-4 font-['Roboto',sans-serif] text-[11px] text-white">
      <button className="flex w-[345px] items-center text-left">
        <svg width="26" height="30" viewBox="0 0 26 30" aria-hidden="true">
          <path d="M3 19a9 9 0 0 0 18 0l-1-6H7z" fill="#f29b2c" />
          <path d="M6 11.500h12M3 15h14M9 18.500h12M2 22h14" stroke="#f6dc9a" strokeWidth="2" />
          <circle cx="18.500" cy="8" r="7" fill="#ff95a0" /><text x="18.500" y="12" fontSize="10" textAnchor="middle" fill="#222">1</text>
        </svg>
        <span className="ml-1 leading-[15px]">31°C<br /><span className="text-[#cfcfcf]">Haze</span></span>
      </button>
      <button aria-label="Start" className="w-[37px]">
        <svg width="21" height="21" viewBox="0 0 21 21" className="ml-1" aria-hidden="true">
          <defs><linearGradient id="win" x1="0" y1="0" x2="1" y2="1"><stop offset="0" stopColor="#7ee6fb" /><stop offset="1" stopColor="#0d9af0" /></linearGradient></defs>
          <path d="M0 0h10v10H0zM11 0h10v10H11zM0 11h10v10H0zM11 11h10v10H11z" fill="url(#win)" />
        </svg>
      </button>
      <label className="flex h-[29px] w-[198px] items-center rounded-full bg-[#3b4a5c] pl-[11px] pr-1.5">
        <Search size={14} strokeWidth={2.2} />
        <input aria-label="Search" placeholder="Search" className="ml-2 min-w-0 flex-1 text-[12px] outline-none placeholder:text-[#dfe3e8]" />
        <svg width="40" height="24" viewBox="0 0 40 24" aria-hidden="true">
          <path d="M0 18q20-4 40 0-4 4-20 4T0 18z" fill="#c98820" />
          <path d="M11 12h10l-1.500 8.500h-7z" fill="#8b6fd8" /><path d="M10 11h12v2.500H10z" fill="#a68bea" />
          <circle cx="12" cy="6" r="4" fill="#ef5a7c" /><circle cx="18" cy="5" r="4.500" fill="#f67d97" /><circle cx="16" cy="8.500" r="3.500" fill="#e73f66" /><circle cx="15" cy="6" r="1.300" fill="#ffd36a" />
          <path d="M22 11l3-1.500M9 11l-3-1" stroke="#3aa655" strokeWidth="2" />
          <path d="M36 1l-4 9" stroke="#3f9bdc" strokeWidth="2.500" /><path d="M29 9l5 2.500-3 6-4 .5z" fill="#c8d3dc" />
        </svg>
      </label>
      <div className="ml-[3px] flex w-[392px] justify-between">
        <TaskIcon label="Task view"><svg width="22" height="20" viewBox="0 0 22 20"><rect x="0" y="6" width="15" height="14" fill="#777" /><rect x="6" y="0" width="16" height="14" fill="#f2f2f2" /><path d="M6 6h9v8H6z" fill="#c9c9c9" /></svg></TaskIcon>
        <TaskIcon label="Teams"><svg width="20" height="18" viewBox="0 0 20 18"><circle cx="12" cy="3.500" r="3" fill="#7b83eb" /><circle cx="17" cy="4.500" r="2" fill="#5059c9" /><path d="M14 7.500h6v5a3 3 0 0 1-5 2z" fill="#5059c9" /><path d="M7 7.500h9v6a4.500 4.500 0 0 1-9 0z" fill="#7b83eb" /><rect y="4" width="10" height="10" rx="1" fill="#4b53bc" /><path d="M2.500 6.500h5M5 6.500V12" stroke="#fff" strokeWidth="1.300" /></svg></TaskIcon>
        <TaskIcon label="Edge">
          <svg width="22" height="22" viewBox="0 0 22 22">
            <defs><linearGradient id="edge" x1="0" y1="0" x2="1" y2=".3"><stop offset="0" stopColor="#1fa8e0" /><stop offset="1" stopColor="#6be04f" /></linearGradient></defs>
            <circle cx="11" cy="11" r="10.500" fill="#1265b5" />
            <path d="M.6 10A10.500 10.500 0 0 1 21.500 10c0 3-2 5-5 5s-4-1.500-3-3c.8-1.500 0-4-3-4S2 9 .6 10z" fill="url(#edge)" />
            <path d="M.6 10C4 5 11 7 11 8.500 8 9 7.500 11 7.500 13c0 5 5 7 9 5.500-3 4-9 3.500-12 1S.5 13 .6 10z" fill="#1b86d8" />
            <path d="M11 9c2 0 3 2 2 3.500s1 3 3.500 3c2.500 0 4-1.500 4-1.500l1.500 3-3 1.500c-5 1-8-1-8.500-4z" fill="#2d2348" opacity=".9" />
          </svg>
        </TaskIcon>
        <TaskIcon label="File Explorer" dot="on"><svg width="22" height="20" viewBox="0 0 22 20"><path d="M0 1h8l2 2.500H0z" fill="#e29b14" /><rect y="3" width="22" height="17" rx="1" fill="#fccb3c" /><path d="M4 20v-3.500a2 2 0 0 1 2-2h10a2 2 0 0 1 2 2V20z" fill="#1178c8" /><path d="M7 17h8v1.500H7z" fill="#0a4d87" /></svg></TaskIcon>
        <TaskIcon label="Chrome profile" dot="active"><Chrome /><span className="absolute right-[3px] top-1 size-3.5 rounded-full border border-[#5b4a35] bg-[conic-gradient(#e89b2e,#8b8ea8,#f0e4cc,#5a4a3a,#e89b2e)]" /></TaskIcon>
        <TaskIcon label="Word"><svg width="21" height="20" viewBox="0 0 21 20"><rect x="5" width="16" height="20" rx="1" fill="#2b7cd3" /><path d="M5 0h16v5H5z" fill="#41a5ee" /><path d="M5 14h16v6H5z" fill="#103f91" /><rect y="4.500" width="11" height="11" rx="1" fill="#185abd" /><path d="M2 7.500l1.500 5 2-5 2 5 1.500-5" stroke="#fff" fill="none" strokeWidth="1.200" /></svg></TaskIcon>
        <TaskIcon label="Chrome"><Chrome /></TaskIcon>
        <TaskIcon label="Spotify" dot="on"><span className="rounded-full bg-black"><FaSpotify size={21} className="text-[#1ed760]" /></span></TaskIcon>
        <TaskIcon label="PowerPoint" dot="on"><svg width="20" height="20" viewBox="0 0 20 20"><rect width="20" height="20" fill="#f6d9cf" /><path d="M0 4l11-2v16L0 17z" fill="#e2522b" /><text x="5.500" y="14" fontSize="10" fontWeight="700" fill="#fff" textAnchor="middle">P</text><circle cx="15" cy="13" r="3.500" fill="#fff" stroke="#e2522b" /><path d="M10 2h9v4h-9z" fill="#f7b49e" /></svg></TaskIcon>
        <TaskIcon label="WhatsApp" dot="on"><FaWhatsapp size={23} className="text-[#25d366]" /></TaskIcon>
      </div>
      <div className="ml-auto flex items-center">
        <ChevronUp size={13} strokeWidth={2.2} />
        <svg width="16" height="10" viewBox="0 0 16 10" className="ml-4" aria-hidden="true"><path d="M4 10A3.500 3.500 0 0 1 3.500 3 4.500 4.500 0 0 1 11.500 2.500 3.700 3.700 0 0 1 12 10z" fill="#eee" /></svg>
        <Ico size={15} className="ml-[14px]"><path d="M1 2h9M1 5h6M3 8h3M14 4v10l-3.500-3H7.500V8h3z" /></Ico>
        <span className="ml-4 w-[26px] text-center leading-[14px]">ENG<br />IN</span>
        <Wifi size={13} strokeWidth={2} className="ml-[19px]" />
        <Volume2 size={16} strokeWidth={1.6} className="ml-[7px]" />
        <svg width="15" height="10" viewBox="0 0 15 10" className="ml-1.5" aria-hidden="true"><rect x=".7" y=".7" width="12" height="8.600" rx="2" fill="none" stroke="#fff" strokeWidth="1.300" /><rect x="2.500" y="2.500" width="7" height="5" fill="#fff" /><path d="M14 3v4" stroke="#fff" strokeWidth="1.500" /></svg>
        <span className="ml-3.5 text-right leading-[14px]">21:29<br />14-04-2024</span>
        <FaBell size={13} className="ml-[7px] text-[#f0b3ee]" />
        <svg width="24" height="24" viewBox="0 0 24 24" className="ml-3.5" aria-hidden="true">
          <path d="M7 2h7L9 18H4Q0 17 2 12z" fill="#2f8df0" /><path d="M2 12l3-8 4 0-4 14Q0 17 2 12z" fill="#48c46e" />
          <path d="M12 2h4q2 0 3 4l-5 2z" fill="#3457d5" /><path d="M14 8h6q3 1 2 5l-2 6h-9z" fill="#d95bbb" /><path d="M18 8h3q2 2 1 5l-1 4z" fill="#f08a4b" />
          <rect x="6" y="15" width="18" height="8" rx="1.500" fill="#ffc91f" /><text x="15" y="21.500" fontSize="7" fontWeight="700" fill="#222" textAnchor="middle">PRE</text>
        </svg>
      </div>
    </footer>
  );
}

export default function App() {
  return (
    <div className="flex h-screen flex-col overflow-hidden bg-white font-['Liberation_Sans',Arial,sans-serif]">
      <BrowserTabs />
      <AddressBar />
      <AppHeader />
      <Toolbar />
      <main className="flex min-h-0 flex-1">
        <LeftRail />
        <LeftPanel />
        <VSplit arrow="left" />
        <CanvasArea />
        <VSplit arrow="right" />
        <LayerPanel />
        <RightRail />
      </main>
      <div className="flex h-[5px] shrink-0 items-center justify-center bg-[#e2e2e2]">
        <div className="h-0 flex-1 border-t-2 border-dotted border-[#c6c6c6]" />
        <div className="flex h-[5px] w-[46px] items-center justify-center border border-[#999] bg-white"><svg width="6" height="3" viewBox="0 0 6 3" aria-hidden="true"><path d="M0 0h6L3 3z" fill="#555" /></svg></div>
        <div className="h-0 flex-1 border-t-2 border-dotted border-[#c6c6c6]" />
      </div>
      <section className="flex h-[119px] shrink-0" aria-label="Library">
        <LibraryPanel />
        <VSplit arrow="right" />
        <PreviewPanel />
      </section>
      <Taskbar />
    </div>
  );
}
